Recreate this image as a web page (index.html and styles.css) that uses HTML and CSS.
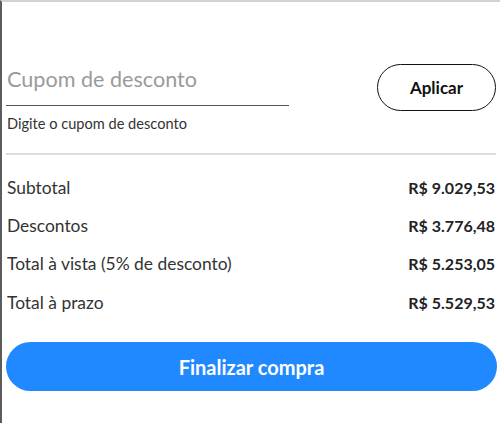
FILE: index.html
```html
<!DOCTYPE html>
<html lang="pt-BR">
<head>
<meta charset="utf-8">
<title>Resumo do pedido</title>
<link rel="stylesheet" href="styles.css">
</head>
<body>
<div class="panel">
  <div class="coupon">
    <div class="field">
      <input class="field-input" type="text" placeholder="Cupom de desconto">
      <div class="field-help">Digite o cupom de desconto</div>
    </div>
    <button class="btn-apply" type="button">Aplicar</button>
  </div>
  <hr class="divider">
  <div class="summary">
    <div class="row"><span class="label">Subtotal</span><span class="value">R$ 9.029,53</span></div>
    <div class="row"><span class="label">Descontos</span><span class="value">R$ 3.776,48</span></div>
    <div class="row"><span class="label">Total à vista (5% de desconto)</span><span class="value">R$ 5.253,05</span></div>
    <div class="row"><span class="label">Total à prazo</span><span class="value">R$ 5.529,53</span></div>
  </div>
  <button class="btn-checkout" type="button">Finalizar compra</button>
</div>
</body>
</html>
```
FILE: styles.css
```css
* { box-sizing: border-box; }
html, body { margin: 0; padding: 0; background: #fff; }
body {
  font-family: "Lato", "Noto Sans", sans-serif;
  color: #333;
  width: 500px;
  height: 423px;
  overflow: hidden;
}
.panel {
  height: 423px;
  border-left: 2px solid #5c5c5c;
  border-top: 2px solid #d2d2d2;
  padding: 0 4px 0 4px;
  display: flex;
  flex-direction: column;
}
.coupon {
  display: flex;
  justify-content: space-between;
  align-items: flex-start;
  padding-top: 60px;
}
.field { width: 283px; }
.field-input {
  display: block;
  width: 100%;
  height: 44px;
  border: none;
  border-bottom: 1px solid #555;
  padding: 0 0 10px 1px;
  font-family: inherit;
  font-size: 21.6px;
  color: #333;
  outline: none;
  background: transparent;
}
.field-input::placeholder { color: #9a9a9a; }
.field-help {
  margin-top: 9px;
  font-size: 14.6px;
  color: #333;
  padding-left: 1px;
}
.btn-apply {
  margin-top: 2px;
  width: 119px;
  height: 47px;
  border: 1.5px solid #111;
  border-radius: 24px;
  background: #fff;
  font-family: inherit;
  font-weight: 700;
  font-size: 17px;
  color: #111;
}
.divider {
  margin: 21px 0 0 0;
  border: none;
  border-top: 2px solid #dcdcdc;
  width: 490px;
}
.summary {
  margin-top: 13px;
  display: flex;
  flex-direction: column;
}
.row {
  display: flex;
  justify-content: space-between;
  align-items: center;
  height: 38.3px;
  width: 490px;
  padding-left: 1px;
  padding-right: 1px;
}
.label { font-size: 17.4px; color: #333; }
.value { font-size: 16px; font-weight: 700; color: #222; }
.btn-checkout {
  margin-top: 21px;
  width: 491px;
  height: 49px;
  border: none;
  border-radius: 25px;
  background: #2189ff;
  color: #fff;
  font-family: inherit;
  font-weight: 700;
  font-size: 20px;
}
```
